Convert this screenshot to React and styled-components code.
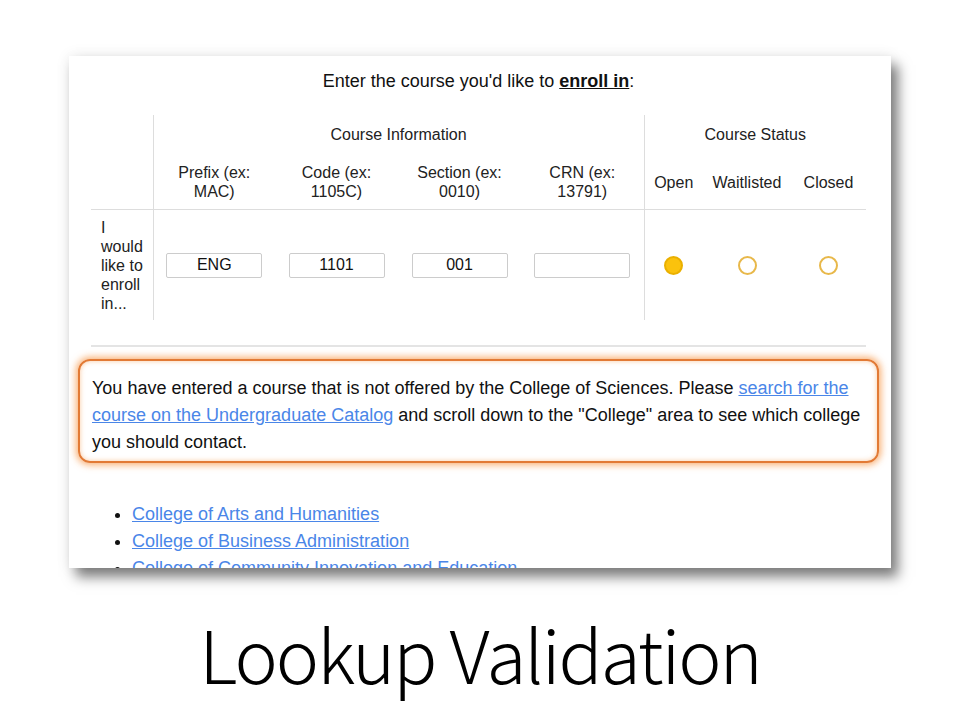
import React from "react";
import styled, { createGlobalStyle } from "styled-components";

const GlobalStyle = createGlobalStyle`
  html, body {
    margin: 0;
    padding: 0;
    background: #ffffff;
  }
  body {
    font-family: "Liberation Sans", Arial, sans-serif;
    color: #111;
  }
`;

const infoColumns = [
  { label: "Prefix (ex: MAC)", value: "ENG" },
  { label: "Code (ex: 1105C)", value: "1101" },
  { label: "Section (ex: 0010)", value: "001" },
  { label: "CRN (ex: 13791)", value: "" },
];

const statusColumns = [
  { label: "Open", checked: true },
  { label: "Waitlisted", checked: false },
  { label: "Closed", checked: false },
];

const colleges = [
  "College of Arts and Humanities",
  "College of Business Administration",
  "College of Community Innovation and Education",
  "College of Engineering and Computer Science",
];

const App = () => {
  return (
    <Slide>
      <GlobalStyle />
      <Card>
        <Heading>
          Enter the course you'd like to <strong>enroll in</strong>:
        </Heading>
        <FormTable>
          <colgroup>
            <col style={{ width: 62 }} />
            <col style={{ width: 122 }} />
            <col style={{ width: 123 }} />
            <col style={{ width: 123 }} />
            <col style={{ width: 123 }} />
            <col style={{ width: 59 }} />
            <col style={{ width: 88 }} />
            <col style={{ width: 75 }} />
          </colgroup>
          <thead>
            <tr>
              <GroupHead />
              <GroupHead colSpan={4} $divider>
                Course Information
              </GroupHead>
              <GroupHead colSpan={3} $divider>
                Course Status
              </GroupHead>
            </tr>
            <tr>
              <SubHead />
              {infoColumns.map((col, i) => (
                <SubHead key={col.label} $divider={i === 0} $pad={14}>
                  {col.label}
                </SubHead>
              ))}
              {statusColumns.map((col, i) => (
                <SubHead key={col.label} $divider={i === 0} $pad={0}>
                  {col.label}
                </SubHead>
              ))}
            </tr>
          </thead>
          <tbody>
            <tr>
              <RowLabel>I would like to enroll in...</RowLabel>
              {infoColumns.map((col, i) => (
                <Cell key={col.label} $divider={i === 0}>
                  <TextInput type="text" defaultValue={col.value} />
                </Cell>
              ))}
              {statusColumns.map((col, i) => (
                <Cell key={col.label} $divider={i === 0}>
                  <Radio $checked={col.checked} />
                </Cell>
              ))}
            </tr>
          </tbody>
        </FormTable>
        <Divider />
        <Alert>
          You have entered a course that is not offered by the College of
          Sciences. Please{" "}
          <Link href="#">search for the course on the Undergraduate Catalog</Link>{" "}
          and scroll down to the "College" area to see which college you should
          contact.
        </Alert>
        <CollegeList>
          {colleges.map((name) => (
            <li key={name}>
              <Link href="#">{name}</Link>
            </li>
          ))}
        </CollegeList>
      </Card>
      <Title>Lookup Validation</Title>
    </Slide>
  );
};

export default App;

const Slide = styled.div`
  width: 960px;
  height: 720px;
  box-sizing: border-box;
  padding-top: 56px;
  display: flex;
  flex-direction: column;
  align-items: center;
  overflow: hidden;
`;

const Card = styled.div`
  width: 822px;
  height: 512px;
  box-sizing: border-box;
  padding: 14px 0 0 22px;
  background: #fff;
  overflow: hidden;
  box-shadow: 7px 9px 12px rgba(0, 0, 0, 0.5), 0 0 14px rgba(0, 0, 0, 0.08);
`;

const Heading = styled.p`
  margin: 0;
  width: 775px;
  text-align: center;
  font-size: 18px;
  line-height: 22px;
  color: #111;

  strong {
    font-weight: bold;
    text-decoration: underline;
  }
`;

const FormTable = styled.table`
  margin-top: 23px;
  width: 775px;
  table-layout: fixed;
  border-collapse: collapse;
  font-size: 16px;
  color: #222;
`;

const GroupHead = styled.th`
  height: 40px;
  padding: 0;
  font-weight: normal;
  text-align: center;
  vertical-align: middle;
  border-left: ${(props) => (props.$divider ? "1px solid #ddd" : "none")};
`;

const SubHead = styled.th`
  height: 54px;
  padding: 0 ${(props) => props.$pad || 0}px;
  font-weight: normal;
  text-align: center;
  vertical-align: middle;
  line-height: 19px;
  border-bottom: 1px solid #ddd;
  border-left: ${(props) => (props.$divider ? "1px solid #ddd" : "none")};
`;

const RowLabel = styled.td`
  height: 110px;
  padding: 0 4px 0 10px;
  line-height: 19px;
  vertical-align: middle;
`;

const Cell = styled.td`
  padding: 0;
  text-align: center;
  vertical-align: middle;
  border-left: ${(props) => (props.$divider ? "1px solid #ddd" : "none")};
`;

const TextInput = styled.input`
  width: 96px;
  height: 25px;
  box-sizing: border-box;
  border: 1px solid #ccc;
  border-radius: 2px;
  text-align: center;
  font-family: "Liberation Sans", Arial, sans-serif;
  font-size: 16px;
  color: #111;
  padding: 0;
  outline: none;
`;

const Radio = styled.span`
  display: inline-block;
  width: 19px;
  height: 19px;
  box-sizing: border-box;
  border-radius: 50%;
  border: 2px solid ${(props) => (props.$checked ? "#eab000" : "#e8b84a")};
  background: ${(props) => (props.$checked ? "#fbc20d" : "#fff")};
  vertical-align: middle;
`;

const Divider = styled.div`
  width: 775px;
  height: 2px;
  margin-top: 25px;
  background: #e4e4e4;
`;

const Alert = styled.p`
  margin: 12px 0 0 -13px;
  width: 801px;
  box-sizing: border-box;
  padding: 14px 14px 5px 12px;
  border: 2px solid #e27a35;
  border-radius: 12px;
  box-shadow: 0 0 7px 2px rgba(247, 150, 70, 0.75),
    inset 0 0 5px rgba(247, 150, 70, 0.5);
  font-size: 18px;
  line-height: 27px;
  color: #111;
`;

const Link = styled.a`
  color: #4a86e8;
  text-decoration: underline;
`;

const CollegeList = styled.ul`
  margin: 38px 0 0;
  padding-left: 41px;
  font-size: 18px;
  line-height: 27px;
`;

const Title = styled.h1`
  margin: 48px 0 0;
  font-family: "Noto Sans CJK JP", "Noto Sans", sans-serif;
  font-weight: 300;
  font-size: 73px;
  letter-spacing: -2px;
  line-height: 1;
  color: #000;
`;
